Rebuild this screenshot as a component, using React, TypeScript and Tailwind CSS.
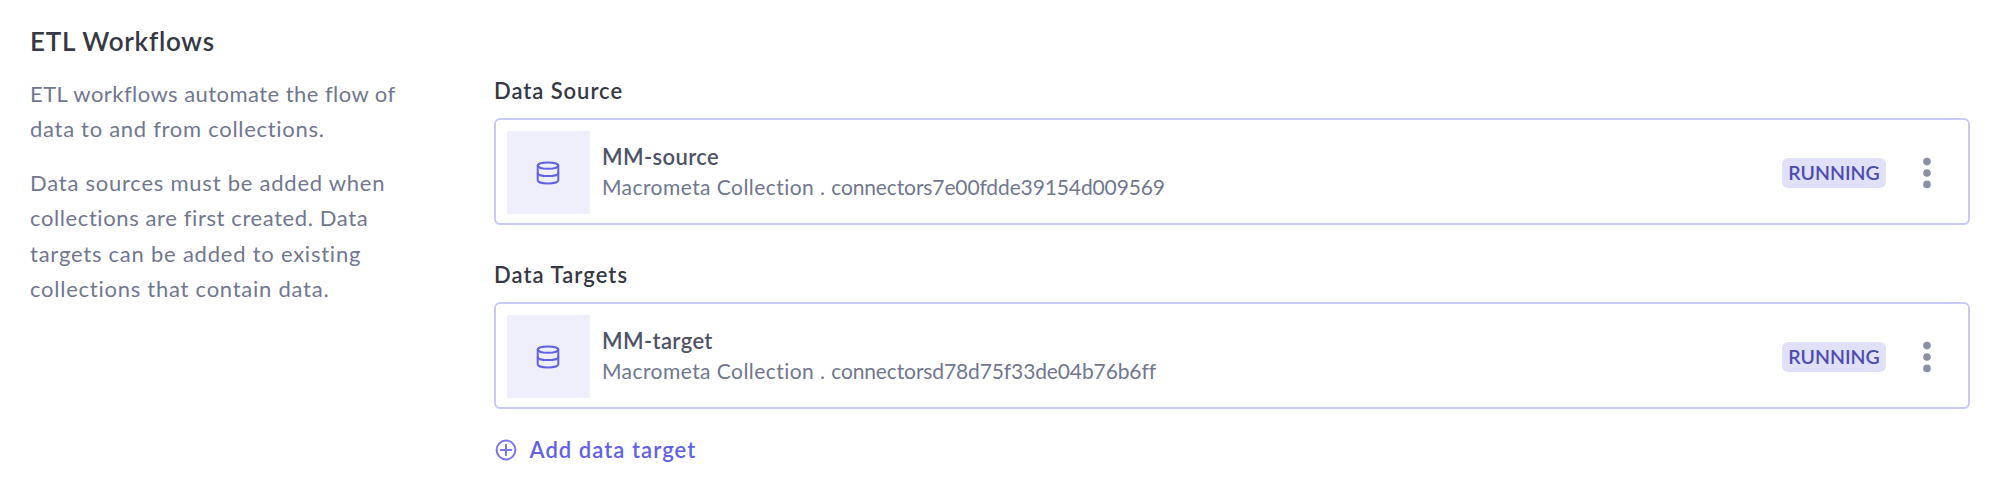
function DatabaseIcon() {
  return (
    <svg className="size-[24px]" viewBox="0 0 24 24" fill="none" stroke="#6161e8" strokeWidth="2" strokeLinecap="round">
      <ellipse cx="12" cy="4.6" rx="10.3" ry="3.2" />
      <path d="M1.7 4.6v14.7c0 1.8 4.6 3.2 10.3 3.2s10.3-1.4 10.3-3.2V4.6" />
      <path d="M1.7 11.9c0 1.8 4.6 3.2 10.3 3.2s10.3-1.4 10.3-3.2" />
    </svg>
  );
}

function MoreIcon() {
  return (
    <svg className="h-[32px] w-[8px]" viewBox="0 0 8 32" fill="#8c90a6">
      <circle cx="4" cy="4.6" r="3.8" />
      <circle cx="4" cy="16" r="3.8" />
      <circle cx="4" cy="27.4" r="3.8" />
    </svg>
  );
}

function PlusCircleIcon() {
  return (
    <svg className="size-[22px]" viewBox="0 0 22 22" fill="none" stroke="#7878ee" strokeWidth="2" strokeLinecap="round">
      <circle cx="11" cy="11" r="9.4" />
      <path d="M11 5.8v10.4M5.8 11h10.4" />
    </svg>
  );
}

function WorkflowCard({ name, connector }: { name: string; connector: string }) {
  return (
    <div className="flex h-[107px] items-center rounded-[6px] border-[2px] border-[#c9c9f8] pt-[2px] pr-[37px] pl-[11px]">
      <div className="flex size-[83px] shrink-0 items-center justify-center bg-[#efeffc] pr-[2px]">
        <DatabaseIcon />
      </div>
      <div className="-mt-[2px] ml-[12px] flex grow flex-col whitespace-nowrap">
        <h3 className="text-[22px] leading-[31px] font-semibold tracking-[0.37px] text-[#4e5367]">{name}</h3>
        <p className="text-[21px] leading-[30px] text-[#70778f]">
          <span className="tracking-[0.44px]">Macrometa Collection . </span>
          <span className="-tracking-[0.12px]">{connector}</span>
        </p>
      </div>
      <span className="mr-[37px] flex h-[30px] w-[104px] items-center justify-center rounded-[6px] bg-[#e0e0fa] pb-[1px] text-[19.5px] leading-[29px] font-semibold text-[#4c4cb0]">
        RUNNING
      </span>
      <MoreIcon />
    </div>
  );
}

export default function App() {
  return (
    <main className="flex h-[504px] w-[2000px] bg-white pl-[30px] font-['Lato',sans-serif]">
      <section className="w-[464px] shrink-0 pt-[23px] whitespace-nowrap">
        <h1 className="text-[26px] leading-[36px] font-semibold tracking-[0.75px] text-[#363844]">ETL Workflows</h1>
        <div className="mt-[16.5px] flex flex-col gap-[18px] text-[22px] leading-[35.5px] text-[#70778f]">
          <p>
            <span className="block tracking-[0.45px]">ETL workflows automate the flow of</span>
            <span className="block tracking-[0.71px]">data to and from collections.</span>
          </p>
          <p>
            <span className="block tracking-[0.76px]">Data sources must be added when</span>
            <span className="block tracking-[0.6px]">collections are first created. Data</span>
            <span className="block tracking-[0.77px]">targets can be added to existing</span>
            <span className="block tracking-[0.75px]">collections that contain data.</span>
          </p>
        </div>
      </section>
      <section className="flex w-[1476px] flex-col pt-[75px]">
        <h2 className="mb-[11px] text-[22px] leading-[32px] font-semibold tracking-[0.95px] text-[#363844]">Data Source</h2>
        <WorkflowCard name="MM-source" connector="connectors7e00fdde39154d009569" />
        <h2 className="mt-[34px] mb-[11px] text-[22px] leading-[32px] font-semibold tracking-[1.05px] text-[#363844]">
          Data Targets
        </h2>
        <WorkflowCard name="MM-target" connector="connectorsd78d75f33de04b76b6ff" />
        <button className="mt-[25px] flex items-center gap-[12.5px] self-start pl-[1px] text-[22px] leading-[32px] font-semibold tracking-[1.05px] text-[#6161e8]">
          <PlusCircleIcon />
          Add data target
        </button>
      </section>
    </main>
  );
}
